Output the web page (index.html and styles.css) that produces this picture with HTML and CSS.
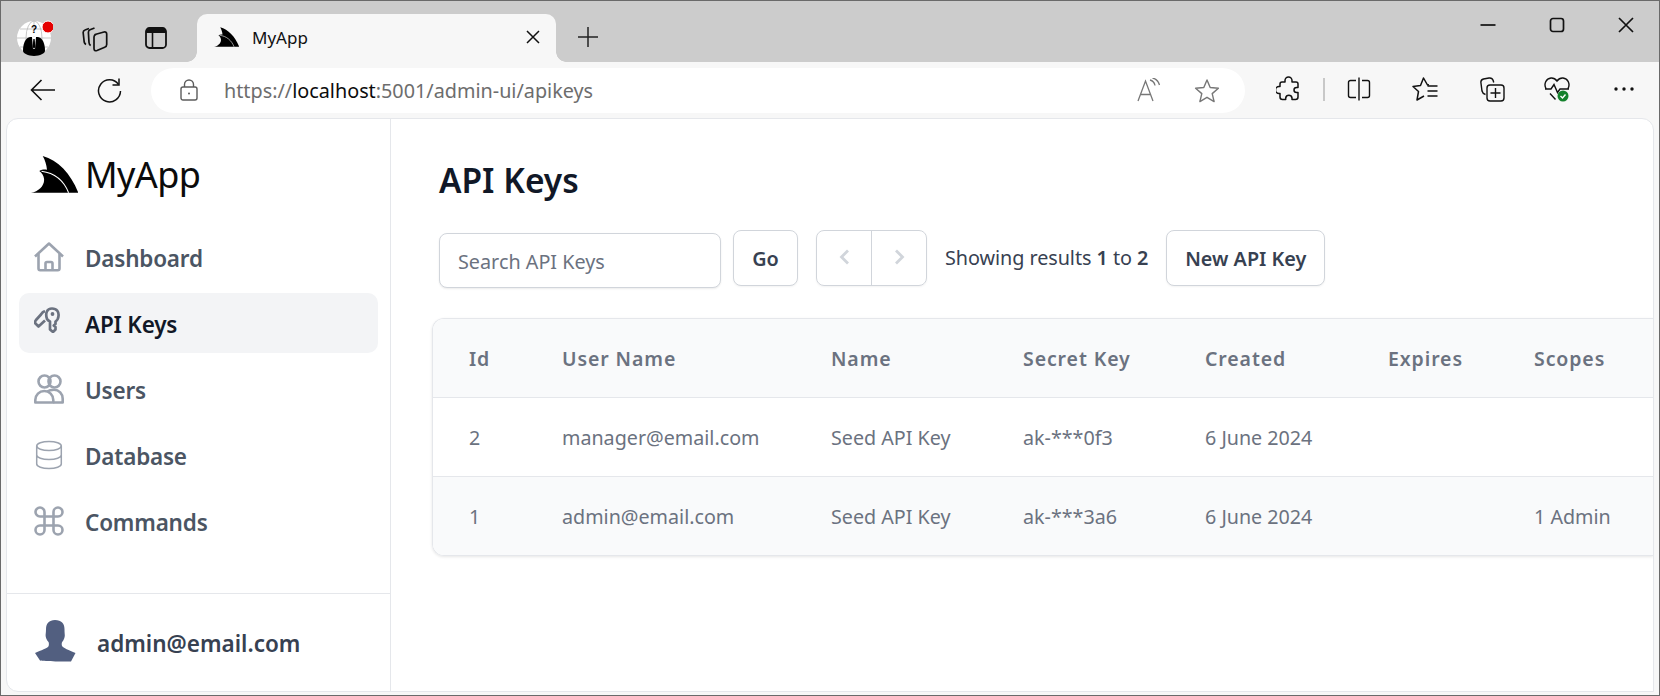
FILE: index.html
```html
<!DOCTYPE html>
<html lang="en">
<head>
<meta charset="utf-8">
<title>MyApp</title>
<link rel="stylesheet" href="styles.css">
</head>
<body>
<svg class="defs" width="0" height="0" aria-hidden="true">
  <symbol id="shark" viewBox="0 0 47 37">
    <path fill="#000" d="M11.7 0C27 4 40 18 47.3 36.7H0C8 35.500 14 29 13 22.500 12.600 19.500 10.800 16.800 8.300 15 10.800 13.600 13.500 13.300 16 13.800 15.500 8.500 14 4 11.700 0Z"/>
    <path fill="none" stroke="#fff" stroke-width="1.100" d="M10.500 15.200C24 17 33 25 37.600 36.700"/>
  </symbol>
</svg>
<div class="window">
  <header class="tabstrip">
    <svg class="avatar" width="36" height="37" viewBox="0 0 36 37">
      <circle cx="17" cy="18" r="17" fill="#fff"/>
      <g fill="none" stroke="#b9b9b9" stroke-width=".8"><ellipse cx="17" cy="18" rx="8" ry="17"/><path d="M0 18h34M3 9h28M3 27h28M17 1v34"/></g>
      <path fill="#000" d="M6 31c0-9 3-13 7-14h8c4 1 7 5 7 14 0 2-5 5-11 5S6 33 6 31Z"/>
      <path fill="#fff" d="M15 17h4l-1 12h-2Z"/>
      <path fill="#000" d="M16.300 19h1.400l.6 8-1.300 2-1.300-2Z"/>
      <circle cx="17" cy="13" r="3.500" fill="#fff"/>
      <text x="17" y="13" class="avatar-q">?</text>
      <circle cx="31" cy="7" r="6" fill="#e50000" stroke="#fff" stroke-width="1"/>
    </svg>
    <svg class="icon-collections" width="26" height="26" viewBox="0 0 26 26" fill="none" stroke="#111" stroke-width="1.700" stroke-linejoin="round">
      <path d="M7 2.500 3 4C1.500 4.500 1 5.500 1.200 7l1 9c.2 1.300.8 2 1.800 2.500"/>
      <path d="M12.500 2 8 3.800C6.800 4.300 6.300 5.300 6.400 6.500l.6 10c.1 1.300.6 2.400 1.700 3"/>
      <path d="M13 8.500 22 6c1.500-.4 2.700.4 2.700 2v10.500c0 1.300-.7 2.300-2 2.800l-7.700 3.200c-1.800.7-3 0-3-2V11c0-1.200.7-2.100 1.800-2.500Z"/>
    </svg>
    <svg class="icon-sidebar" width="22" height="22" viewBox="0 0 22 22">
      <rect x="1" y="1" width="20" height="20" rx="3.500" fill="none" stroke="#111" stroke-width="1.800"/>
      <path fill="#111" d="M1 4.500A3.500 3.500 0 0 1 4.500 1h13A3.500 3.500 0 0 1 21 4.500V6H1Z"/>
      <path stroke="#111" stroke-width="1.600" d="M7.500 6v15"/>
    </svg>
    <div class="tab">
      <svg class="tab-logo" width="25" height="20"><use href="#shark"/></svg>
      <span class="tab-title">MyApp</span>
      <svg class="tab-close" width="14" height="14" viewBox="0 0 14 14"><path d="m1 1 12 12M13 1 1 13" stroke="#111" stroke-width="1.500"/></svg>
    </div>
    <svg class="new-tab" width="22" height="22" viewBox="0 0 22 22"><path d="M11 1v20M1 11h20" stroke="#222" stroke-width="1.500"/></svg>
    <div class="window-controls">
      <svg width="16" height="16" viewBox="0 0 16 16"><path d="M.5 8h15" stroke="#111" stroke-width="1.700"/></svg>
      <svg width="16" height="16" viewBox="0 0 16 16"><rect x="1.500" y="1.500" width="13" height="13" rx="2.500" fill="none" stroke="#111" stroke-width="1.700"/></svg>
      <svg width="16" height="16" viewBox="0 0 16 16"><path d="m1 1 14 14M15 1 1 15" stroke="#111" stroke-width="1.700"/></svg>
    </div>
  </header>

  <nav class="toolbar">
    <svg class="tb-back" width="26" height="24" viewBox="0 0 26 24"><path d="M25 12H2M11.500 2 1.500 12l10 10" fill="none" stroke="#111" stroke-width="1.600"/></svg>
    <svg class="tb-reload" width="25" height="25" viewBox="0 0 25 25" fill="none" stroke="#111" stroke-width="1.500"><path d="M21.500 6.500A11 11 0 1 0 23.500 13"/><path d="M22 .500v6.500h-6.500"/></svg>
    <div class="address">
      <svg class="lock" width="18" height="22" viewBox="0 0 18 22" fill="none" stroke="#5c5c5c" stroke-width="1.400"><rect x="1" y="8" width="16" height="13" rx="2"/><path d="M4.500 8V5.500a4.500 4.500 0 0 1 9 0V8"/><circle cx="9" cy="14.500" r="1" fill="#5c5c5c" stroke="none"/></svg>
      <span class="url">https://<b>localhost</b>:5001/admin-ui/apikeys</span>
      <svg class="read-aloud" width="24" height="24" viewBox="0 0 24 24" fill="none" stroke="#777" stroke-width="1.300"><path d="M1 23 8.500 3 16 23M3.500 16.500h10"/><path d="M13 2c3 .8 4.500 2.500 5 5.500M15.500 0c3.500.8 6 3.500 7 7"/></svg>
      <svg class="addr-star" width="26" height="25" viewBox="0 0 26 25"><path d="m13 2 3.200 7.500 8.200.7-6.200 5.400 1.900 8L13 19.300l-7.100 4.300 1.900-8-6.200-5.400 8.200-.7Z" fill="none" stroke="#777" stroke-width="1.400" stroke-linejoin="round"/></svg>
    </div>
    <svg class="tb-puzzle" width="24" height="26" viewBox="0 0 24 26"><path d="M9 4.500a3.500 3.500 0 0 1 7 0V6h4c1.300 0 2 .8 2 2v3.500h-1.500a2.500 2.500 0 0 0 0 5H22V21c0 1.700-1 2.500-2.500 2.500H16V22a3.200 3.200 0 0 0-6.300 0v1.500H6.500C5 23.500 4 22.500 4 21v-3.500H3a3.500 3.500 0 0 1 0-7h1V8c0-1.200.8-2 2-2h3Z" fill="none" stroke="#111" stroke-width="1.500" stroke-linejoin="round"/></svg>
    <span class="tb-sep"></span>
    <svg class="tb-split" width="24" height="24" viewBox="0 0 24 24" fill="none" stroke="#111" stroke-width="1.400"><path d="M9 3.500H3.500a2 2 0 0 0-2 2v13a2 2 0 0 0 2 2H9M15 3.500h5.500a2 2 0 0 1 2 2v13a2 2 0 0 1-2 2H15M12 .500v23"/></svg>
    <svg class="tb-fav" width="26" height="25" viewBox="0 0 26 25" fill="none" stroke="#111" stroke-width="1.500" stroke-linejoin="round"><path d="M17 7.800 15.500 8 11.500 1 8.500 8.500l-7.500 1 5.500 5-1.500 8.500 7-4"/><path d="M15.500 9h10M15.500 14h10M15.500 19h10"/></svg>
    <svg class="tb-coll" width="25" height="25" viewBox="0 0 25 25" fill="none" stroke="#111" stroke-width="1.400"><path d="M5.500 17.500C3.500 17 2.500 16 2 14L.9 5.500C.7 3.700 1.700 2.500 3.500 2L9 1c2-.3 3.500.5 4.200 2.500l.5 2"/><rect x="7" y="8" width="17" height="16" rx="3"/><path d="M15.500 11v10M10.500 16h10"/></svg>
    <svg class="tb-health" width="26" height="26" viewBox="0 0 26 26"><path d="M2 12.500C-.5 8 2 2.500 7 2c2.500-.2 4.500 1 6 3 1.500-2 3.500-3.200 6-3 5 .5 7.500 6 5 10.500M1 13h6l3-4.500 3.500 8 2.500-3.500h9M6 17.500l5.500 6" fill="none" stroke="#111" stroke-width="1.400"/><circle cx="19" cy="20" r="5.500" fill="#14822c"/><path d="m16.500 20 2 2 3-3.500" fill="none" stroke="#fff" stroke-width="1.400"/></svg>
    <svg class="tb-more" width="20" height="4" viewBox="0 0 20 4" fill="#111"><circle cx="2" cy="2" r="1.700"/><circle cx="10" cy="2" r="1.700"/><circle cx="18" cy="2" r="1.700"/></svg>
  </nav>

  <div class="app">
    <aside class="sidebar">
      <div class="brand">
        <svg width="47" height="37"><use href="#shark"/></svg>
        <span class="brand-name">MyApp</span>
      </div>
      <ul class="nav">
        <li class="nav-item">
          <svg class="nav-icon" width="30" height="30" viewBox="0 0 30 30" fill="none" stroke="#9ca3af" stroke-width="2.600" stroke-linejoin="round"><path d="M1 14.500 15 1.500l14 13"/><path d="M4.500 12v14.500c0 1 .6 1.700 1.700 1.700h17.600c1.100 0 1.700-.7 1.700-1.700V12"/><path d="M11.500 28v-6.500c0-1 .6-1.500 1.500-1.500h4c.9 0 1.500.5 1.500 1.500V28"/></svg>
          <span>Dashboard</span>
        </li>
        <li class="nav-item active">
          <svg class="nav-icon key" width="26" height="26" viewBox="0 0 26 26" fill="none" stroke="#6b7280" stroke-width="2.700" stroke-linejoin="round"><path d="M13 12C11 6 13 1.500 18 1.500c5 0 7 3.500 6.500 7.500-.2 3-1.500 4.500-3 5.500V17l-1.700 1.500 1.700 1.500v2.500L19 25l-3-2.500v-8c-1.300-.5-2.300-1.200-3-2.500Z"/><path d="M11 4.500h-1C8.500 5 8 6 7 7.500L2 13c-1.200 1.500-1.200 3 0 4l2.500 2.500 6.500-6"/><circle cx="18.500" cy="7" r="1.900" fill="#6b7280" stroke="none"/></svg>
          <span>API Keys</span>
        </li>
        <li class="nav-item">
          <svg class="nav-icon" width="30" height="30" viewBox="0 0 30 30" fill="none" stroke="#9ca3af" stroke-width="2.600" stroke-linejoin="round"><circle cx="10.500" cy="7.500" r="6"/><circle cx="20.500" cy="7.500" r="6"/><path d="M1.300 28.500v-2.500a9 9 0 0 1 18 0v2.500Z"/><path d="M13 17.500c2-1.200 4-1.800 7-1.800 5 0 8.700 4 8.700 9v3.800H19.300"/></svg>
          <span>Users</span>
        </li>
        <li class="nav-item">
          <svg class="nav-icon" width="30" height="30" viewBox="0 0 30 30" fill="none" stroke="#9ca3af" stroke-width="1.500"><ellipse cx="15" cy="6" rx="12.300" ry="4.500"/><path d="M2.700 6v18c0 2.500 5.500 4.500 12.300 4.500S27.300 26.500 27.300 24V6M2.700 15c0 2.500 5.500 4.500 12.300 4.500S27.300 17.500 27.300 15"/></svg>
          <span>Database</span>
        </li>
        <li class="nav-item">
          <svg class="nav-icon" width="30" height="30" viewBox="0 0 30 30" fill="none" stroke="#9ca3af" stroke-width="2.600"><path d="M10.500 10.500h9v9h-9ZM10.500 10.500H6a4.500 4.500 0 1 1 4.500-4.500ZM19.500 10.500V6a4.500 4.500 0 1 1 4.500 4.500ZM10.500 19.500V24A4.500 4.500 0 1 1 6 19.500ZM19.500 19.500H24a4.500 4.500 0 1 1-4.500 4.500Z"/></svg>
          <span>Commands</span>
        </li>
      </ul>
      <div class="user">
        <svg class="user-pic" width="41" height="43" viewBox="0 0 41 43"><path fill="#525f80" d="M20 0c6.500 0 9.500 3.500 9.500 9 0 3.500.3 5 .3 6.500 0 2-1 4.500-2.600 6.500-.6.800-.7 3 0 4.200.8 1.500 6.700 4 13.300 6.800l-4.500 8.500C32 41.500 9 41.500 5 40.500L0 33c6-2.800 12.700-5 13.500-6.800.6-1.200.5-3.400 0-4.200-1.800-2-2.900-4.500-2.900-6.500 0-1.500.4-3 .4-6.500C11 3.500 14 0 20 0Z"/></svg>
        <span class="user-name">admin@email.com</span>
      </div>
    </aside>

    <main class="main">
      <h1 class="title">API Keys</h1>
      <div class="controls">
        <input class="search" type="text" placeholder="Search API Keys">
        <button class="btn btn-go">Go</button>
        <div class="pager">
          <span class="pager-btn"><svg width="11" height="16" viewBox="0 0 11 16"><path d="M9 1.500 2.500 8 9 14.500" fill="none" stroke="#d1d5db" stroke-width="2.800"/></svg></span>
          <span class="pager-btn"><svg width="11" height="16" viewBox="0 0 11 16"><path d="M2 1.500 8.500 8 2 14.500" fill="none" stroke="#d1d5db" stroke-width="2.800"/></svg></span>
        </div>
        <p class="results">Showing results <b>1</b> to <b>2</b></p>
        <button class="btn btn-new">New API Key</button>
      </div>
      <div class="table-card">
        <table class="grid">
          <colgroup><col class="c-id"><col class="c-user"><col class="c-name"><col class="c-secret"><col class="c-created"><col class="c-expires"><col class="c-scopes"></colgroup>
          <thead>
            <tr><th>Id</th><th>User Name</th><th>Name</th><th>Secret Key</th><th>Created</th><th>Expires</th><th>Scopes</th></tr>
          </thead>
          <tbody>
            <tr><td>2</td><td>manager@email.com</td><td>Seed API Key</td><td>ak-***0f3</td><td>6 June 2024</td><td></td><td></td></tr>
            <tr class="alt"><td>1</td><td>admin@email.com</td><td>Seed API Key</td><td>ak-***3a6</td><td>6 June 2024</td><td></td><td>1 Admin</td></tr>
          </tbody>
        </table>
      </div>
    </main>
  </div>
</div>
</body>
</html>
```
FILE: styles.css
```css
* { box-sizing: border-box; }
html, body { margin: 0; padding: 0; height: 100%; overflow: hidden; }
body { font-family: "Noto Sans", "Open Sans", sans-serif; color: #111827; }
.defs { position: absolute; }
svg { display: block; flex: none; }

.window { width: 1660px; height: 696px; background: #f7f7f7; border: 1px solid #6a6a6a; display: flex; flex-direction: column; overflow: hidden; }

/* tab strip */
.tabstrip { height: 61px; background: #cccccc; display: flex; align-items: flex-start; padding-left: 16px; flex: none; }
.avatar { margin-top: 19px; }
.avatar-q { font: 700 10px "Liberation Sans", sans-serif; text-anchor: middle; fill: #000; }
.icon-collections { margin: 25px 0 0 29px; }
.icon-sidebar { margin: 26px 0 0 37px; }
.tab { width: 359px; height: 48px; margin: 13px 0 0 30px; background: #f7f7f7; border-radius: 10px 10px 0 0; display: flex; align-items: center; padding: 0 16px 2px 17px; position: relative; }
.tab::before, .tab::after { content: ""; position: absolute; bottom: 0; width: 10px; height: 10px; background: radial-gradient(circle at 0 0, #ccc 9.500px, #f7f7f7 10px); }
.tab::before { left: -10px; }
.tab::after { right: -10px; transform: scaleX(-1); }
.tab-title { font: 400 17px "Noto Sans", sans-serif; margin-left: 13px; color: #111; flex: 1; }
.new-tab { margin: 25px 0 0 21px; }
.window-controls { margin-left: auto; margin-top: 16px; display: flex; gap: 53px; padding-right: 25px; }

/* toolbar */
.toolbar { height: 56px; display: flex; align-items: center; flex: none; padding: 0 0 0 29px; }
.tb-reload { margin-left: 41px; }
.address { width: 1094px; height: 45px; margin-left: 29px; background: #fff; border-radius: 23px; display: flex; align-items: center; padding-left: 29px; }
.lock { margin-top: -1px; }
.url { font-size: 19.800px; color: #6d6d6d; margin-left: 26px; flex: 1; }
.url b { font-weight: 400; color: #0c0c0c; }
.read-aloud { margin-right: 33px; }
.addr-star { margin-right: 25px; }
.tb-puzzle { margin: -2px 0 0 31px; }
.tb-sep { width: 2px; height: 23px; background: #c8c8c8; margin: -2px 0 0 23px; }
.tb-split { margin: -2px 0 0 22px; }
.tb-fav { margin: -2px 0 0 41px; }
.tb-coll { margin: -2px 0 0 42px; }
.tb-health { margin: -2px 0 0 39px; }
.tb-more { margin: -2px 0 0 44px; }

/* app */
.app { flex: 1; min-height: 0; margin: 0 5px 3px 5px; background: #fff; border: 1px solid #e5e7eb; border-radius: 12px 12px 0 12px; display: flex; overflow: hidden; }
.sidebar { width: 384px; flex: none; border-right: 1px solid #e5e7eb; display: flex; flex-direction: column; }
.brand { display: flex; align-items: center; height: 37px; margin: 37px 0 0 24px; gap: 7px; }
.brand-name { font-size: 36px; font-weight: 400; color: #0b0b0b; letter-spacing: -.6px; }
.nav { list-style: none; margin: 34px 12px 0; padding: 0; display: flex; flex-direction: column; gap: 6px; flex: 1; }
.nav-item { height: 60px; border-radius: 10px; display: flex; align-items: center; gap: 21px; padding-left: 15px; font-size: 22.500px; font-weight: 600; color: #4b5563; letter-spacing: -.2px; }
.nav-item span { padding-top: 2px; }
.nav-item.active { background: #f3f4f6; color: #111827; }
.nav-icon.key { margin: -6px 4px 0 0; }
.user { height: 98px; border-top: 1px solid #e5e7eb; display: flex; align-items: center; padding-left: 28px; gap: 21px; font-size: 22.500px; font-weight: 600; color: #374151; padding-bottom: 2px; }
.user-name { padding-top: 4px; }

.main { flex: 1; min-width: 0; padding: 0 0 0 41px; }
.title { margin: 38px 0 0 7px; font-size: 33.500px; line-height: 46px; font-weight: 600; color: #111827; }
.controls { display: flex; align-items: flex-start; margin: 27px 0 0 7px; }
.search { width: 282px; height: 55px; margin-top: 3px; border: 1px solid #d1d5db; border-radius: 8px; padding: 2px 18px 0 18px; font: 400 19.800px "Noto Sans", sans-serif; box-shadow: 0 1px 2px rgba(0,0,0,.08); color: #111827; }
.search::placeholder { color: #6b7280; opacity: 1; }
.btn { height: 56px; background: #fff; border: 1px solid #d1d5db; border-radius: 8px; font: 600 19.800px "Noto Sans", sans-serif; color: #374151; padding: 0; box-shadow: 0 1px 2px rgba(0,0,0,.05); }
.btn-go { width: 65px; margin-left: 12px; }
.pager { width: 111px; height: 56px; margin-left: 18px; border: 1px solid #d1d5db; border-radius: 8px; display: flex; box-shadow: 0 1px 2px rgba(0,0,0,.05); }
.pager-btn { flex: 1; display: flex; align-items: center; justify-content: center; padding-bottom: 2px; }
.pager-btn + .pager-btn { border-left: 1px solid #d1d5db; }
.results { margin: 15px 0 0 18px; font-size: 19.800px; color: #374151; line-height: 26px; white-space: nowrap; letter-spacing: -.05px; }
.results b { font-weight: 600; }
.btn-new { width: 159px; margin-left: 18px; }

.table-card { margin-top: 30px; border: 1px solid #e5e7eb; border-right: 0; border-radius: 12px 0 0 12px; overflow: hidden; box-shadow: 0 1px 3px rgba(0,0,0,.1); }
.grid { border-collapse: collapse; table-layout: fixed; width: 1221px; font-size: 19.700px; }
.c-id { width: 93px; } .c-user { width: 269px; } .c-name { width: 192px; } .c-secret { width: 182px; } .c-created { width: 183px; } .c-expires { width: 146px; } .c-scopes { width: 156px; }
.grid th, .grid td { text-align: left; padding: 0 0 0 36px; font-weight: 400; white-space: nowrap; }
.grid th { height: 78px; padding-top: 2px; background: #f9fafb; font-weight: 600; font-size: 19.500px; color: #6b7280; letter-spacing: .9px; }
.grid td { height: 79px; padding-top: 2px; border-top: 1px solid #e5e7eb; color: #6b7280; }
.grid tr.alt td { background: #f9fafb; }
```
